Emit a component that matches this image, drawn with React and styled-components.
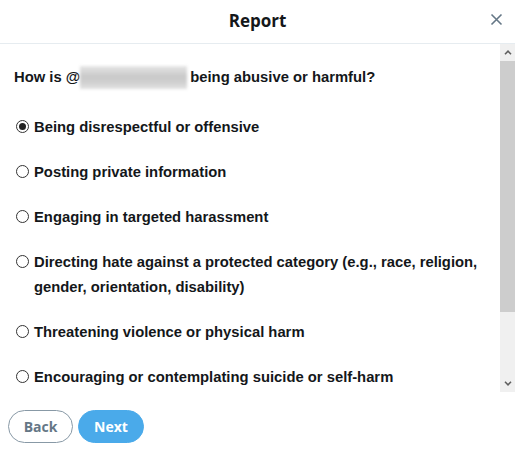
import styled, { createGlobalStyle } from "styled-components";

const GlobalStyle = createGlobalStyle`
  html, body {
    margin: 0;
    padding: 0;
    background: #fff;
  }
  * {
    box-sizing: border-box;
  }
`;

const Dialog = styled.div`
  width: 515px;
  height: 452px;
  display: flex;
  flex-direction: column;
  background: #fff;
  overflow: hidden;
`;

const Header = styled.div`
  height: 44px;
  flex: 0 0 44px;
  border-bottom: 1px solid #e6ecf0;
  display: flex;
  align-items: center;
  justify-content: center;
  position: relative;
`;

const Title = styled.h2`
  margin: 0 0 3px;
  font-family: "Open Sans", "Noto Sans", sans-serif;
  font-weight: 700;
  font-size: 17px;
  color: #14171a;
`;

const CloseButton = styled.button`
  position: absolute;
  right: 12px;
  top: 13px;
  width: 13px;
  height: 13px;
  padding: 0;
  border: none;
  background: none;
  cursor: pointer;
  display: flex;
`;

const Body = styled.div`
  flex: 0 0 348px;
  display: flex;
  min-height: 0;
`;

const Content = styled.div`
  flex: 1;
  overflow: hidden;
  padding: 21px 0 0 14px;
  font-family: "Liberation Sans", Arial, sans-serif;
  font-weight: 700;
  font-size: 14.8px;
  color: #14171a;
`;

const Question = styled.p`
  margin: 0;
  line-height: 24px;
`;

const Hidden = styled.span`
  display: inline-block;
  width: 107px;
  height: 23px;
  margin: 0 3px 0 0;
  vertical-align: -7px;
  background: linear-gradient(180deg, #e6e6e6 0%, #c9c9c9 45%, #cfcfcf 70%, #e2e2e2 100%);
  filter: blur(1.5px);
`;

const Options = styled.div`
  margin-top: 26px;
  display: flex;
  flex-direction: column;
  gap: 20px;
`;

const Option = styled.label`
  display: flex;
  align-items: flex-start;
  line-height: 25px;
  cursor: pointer;
`;

const Radio = styled.span`
  flex: 0 0 13px;
  width: 13px;
  height: 13px;
  margin: 5px 5px 0 2px;
  border: 1px solid #333;
  border-radius: 50%;
  display: flex;
  align-items: center;
  justify-content: center;

  &::after {
    content: "";
    width: 7px;
    height: 7px;
    border-radius: 50%;
    background: ${(props) => (props.checked ? "#222" : "transparent")};
  }
`;

const Scrollbar = styled.div`
  flex: 0 0 15px;
  display: flex;
  flex-direction: column;
  background: #f0f0f0;
`;

const ScrollArrow = styled.div`
  height: 17px;
  flex: 0 0 17px;
  display: flex;
  align-items: center;
  justify-content: center;
`;

const Track = styled.div`
  flex: 1;
`;

const Thumb = styled.div`
  height: 251px;
  background: #cdcdcd;
`;

const Footer = styled.div`
  flex: 1;
  display: flex;
  align-items: flex-start;
  gap: 5px;
  padding: 18px 0 0 8px;
`;

const Button = styled.button`
  width: ${(props) => props.width}px;
  height: 33px;
  border-radius: 17px;
  padding: 0;
  display: flex;
  align-items: center;
  justify-content: center;
  font-family: "Open Sans", "Noto Sans", sans-serif;
  font-weight: 700;
  font-size: 14px;
  cursor: pointer;
`;

const BackButton = styled(Button)`
  background: #fff;
  border: 1px solid #8899a6;
  color: #657786;
`;

const NextButton = styled(Button)`
  background: #4aaaea;
  border: 1px solid #4aaaea;
  color: #fff;
`;

const options = [
  "Being disrespectful or offensive",
  "Posting private information",
  "Engaging in targeted harassment",
  "Directing hate against a protected category (e.g., race, religion, gender, orientation, disability)",
  "Threatening violence or physical harm",
  "Encouraging or contemplating suicide or self-harm",
];

const Chevron = ({ up }) => (
  <svg width="8" height="5" viewBox="0 0 8 5">
    <path
      d={up ? "M1 4.2 L4 1.2 L7 4.2" : "M1 0.8 L4 3.8 L7 0.8"}
      fill="none"
      stroke="#606060"
      strokeWidth="1.6"
    />
  </svg>
);

export default function App() {
  return (
    <Dialog>
      <GlobalStyle />
      <Header>
        <Title>Report</Title>
        <CloseButton aria-label="Close">
          <svg width="13" height="13" viewBox="0 0 13 13">
            <path d="M1.5 1.5 L11.5 11.5 M11.5 1.5 L1.5 11.5" stroke="#657786" strokeWidth="1.6" />
          </svg>
        </CloseButton>
      </Header>
      <Body>
        <Content>
          <Question>
            How is @<Hidden />being abusive or harmful?
          </Question>
          <Options>
            {options.map((text, i) => (
              <Option key={text}>
                <Radio checked={i === 0} />
                <span>{text}</span>
              </Option>
            ))}
          </Options>
        </Content>
        <Scrollbar>
          <ScrollArrow>
            <Chevron up />
          </ScrollArrow>
          <Track>
            <Thumb />
          </Track>
          <ScrollArrow>
            <Chevron />
          </ScrollArrow>
        </Scrollbar>
      </Body>
      <Footer>
        <BackButton width={65}>Back</BackButton>
        <NextButton width={66}>Next</NextButton>
      </Footer>
    </Dialog>
  );
}
